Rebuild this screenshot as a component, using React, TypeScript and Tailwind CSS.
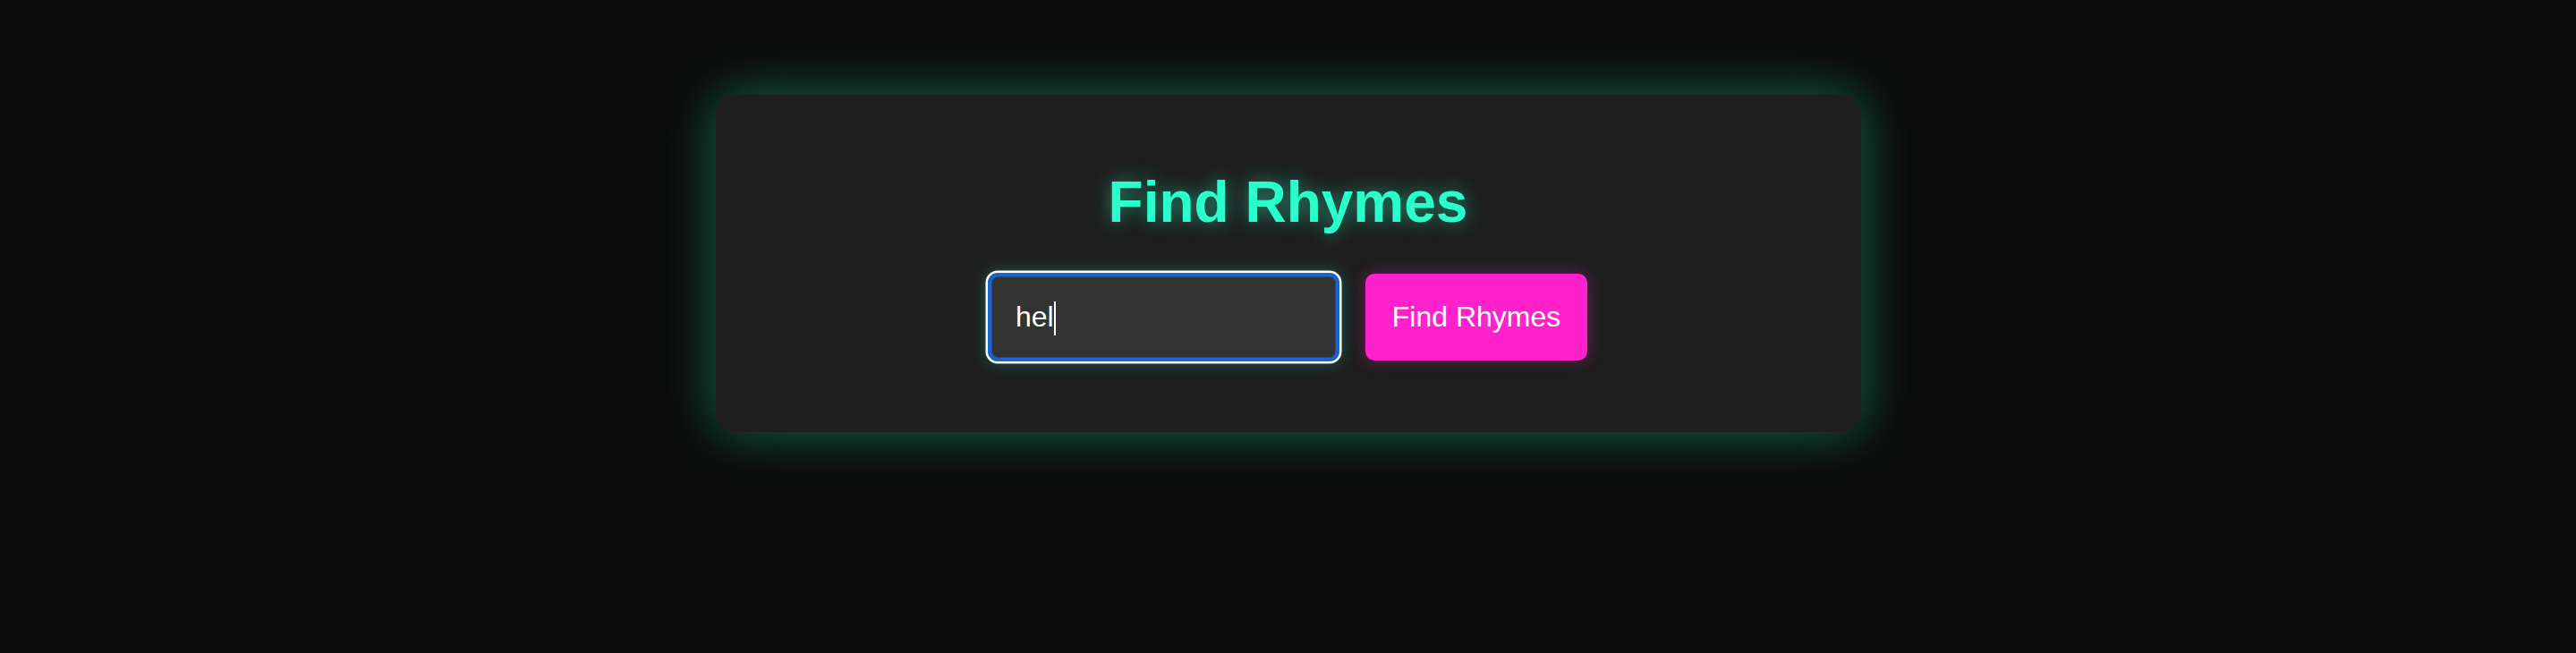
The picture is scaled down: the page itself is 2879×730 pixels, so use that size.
import { useState } from "react";

const App = () => {
  const [word, setWord] = useState("hel");

  return (
    <div className="min-h-screen w-full bg-[#0b0b0b] pt-[106px] font-['Liberation_Sans',Arial,sans-serif]">
      {/* Search card */}
      <div className="mx-auto w-[1280px] rounded-[20px] bg-[#1e1e1e] px-[40px] pt-[84px] pb-[80px] shadow-[0_0_60px_rgba(30,230,170,0.42)]">
        <h1 className="mb-[42px] text-center text-[64px] font-bold leading-[73.6px] text-[#2affcc] [text-shadow:0_0_20px_rgba(42,255,204,0.5)]">
          Find Rhymes
        </h1>
        <div className="flex items-center justify-center gap-[30px]">
          <div className="relative">
            <input
              value={word}
              onChange={(e) => setWord(e.target.value)}
              className="h-[97px] w-[391px] rounded-[10px] bg-[#333333] px-[30px] text-[32px] text-white caret-transparent outline-none shadow-[inset_0_0_0_3.5px_#1a65d0,0_0_0_1px_#1a65d0,0_0_0_3.5px_#ffffff,0_0_16px_5px_rgba(42,255,204,0.22)]"
            />
            <span className="pointer-events-none absolute left-[73px] top-[31px] h-[38px] w-[2px] bg-white" />
          </div>
          <button className="h-[97px] w-[248px] rounded-[10px] bg-[#ff22cc] text-[32px] text-white shadow-[0_0_16px_rgba(255,34,204,0.35)]">
            Find Rhymes
          </button>
        </div>
      </div>
    </div>
  );
};

export default App;
